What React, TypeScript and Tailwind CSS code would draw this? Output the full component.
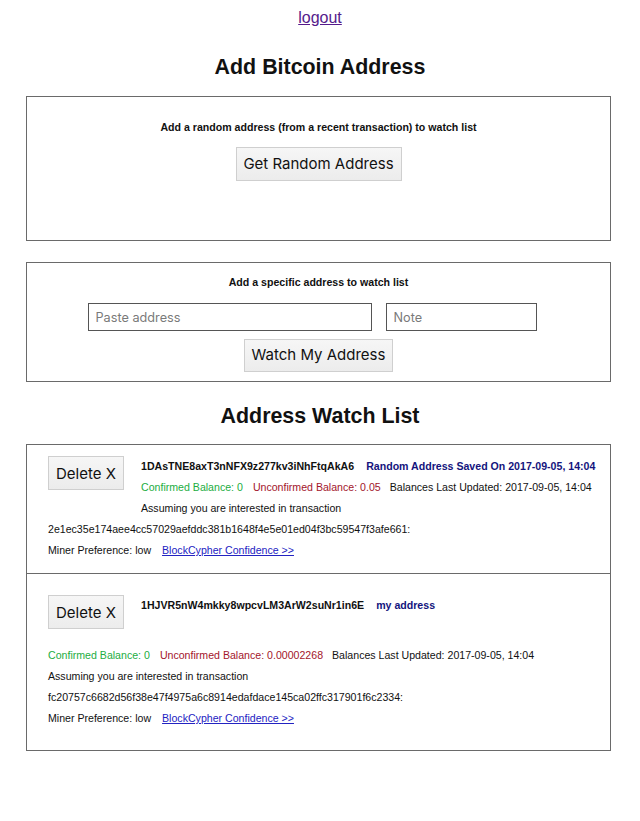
import React from 'react';

const sans = { fontFamily: '"Liberation Sans", Arial, sans-serif' };

function GrayButton({ children, className }: { children: React.ReactNode; className?: string }) {
  return (
    <button
      className={`whitespace-nowrap border border-[#cfcfcf] bg-gradient-to-b from-[#f6f6f6] to-[#ececec] text-[15px] text-[#111] font-['Inter',sans-serif] ${className ?? ''}`}
    >
      {children}
    </button>
  );
}

interface WatchItem {
  address: string;
  note: string;
  confirmed: string;
  unconfirmed: string;
  updated: string;
  tx: string;
}

const items: WatchItem[] = [
  {
    address: '1DAsTNE8axT3nNFX9z277kv3iNhFtqAkA6',
    note: 'Random Address Saved On 2017-09-05, 14:04',
    confirmed: '0',
    unconfirmed: '0.05',
    updated: '2017-09-05, 14:04',
    tx: '2e1ec35e174aee4cc57029aefddc381b1648f4e5e01ed04f3bc59547f3afe661',
  },
  {
    address: '1HJVR5nW4mkky8wpcvLM3ArW2suNr1in6E',
    note: 'my address',
    confirmed: '0',
    unconfirmed: '0.00002268',
    updated: '2017-09-05, 14:04',
    tx: 'fc20757c6682d56f38e47f4975a6c8914edafdace145ca02ffc317901f6c2334',
  },
];

// each line is its own max-content block, so a line too wide to sit beside the
// floated button drops below it (as in the second row)
const line = 'flow-root w-max whitespace-nowrap';

function WatchRow({ item, className }: { item: WatchItem; className: string }) {
  return (
    <div className={`pl-[21px] pr-[6px] text-[10.6px] leading-[21px] text-[#111] flow-root ${className}`}>
      <GrayButton className="float-left w-[76px] h-[34px] mr-[17px] mb-[16px]">Delete X</GrayButton>
      <div className={line}>
        <span className="font-bold mr-[12px]">{item.address}</span>
        <span className="font-bold text-[#14147d]">{item.note}</span>
      </div>
      <div className={line}>
        <span className="text-[#22ad3f] mr-[10px]">Confirmed Balance: {item.confirmed}</span>
        <span className="text-[#a3152b] mr-[9px]">Unconfirmed Balance: {item.unconfirmed}</span>
        <span>Balances Last Updated: {item.updated}</span>
      </div>
      <div className={line}>Assuming you are interested in transaction</div>
      <div className={line}>{item.tx}:</div>
      <div className={line}>
        <span className="mr-[11px]">Miner Preference: low</span>
        <a href="#" className="text-[#2323c2] underline">BlockCypher Confidence &gt;&gt;</a>
      </div>
    </div>
  );
}

export default function App() {
  return (
    <div className="min-h-screen bg-white text-[#111] pb-[70px]" style={sans}>
      <div className="pt-[8px] text-center leading-[20px]">
        <a href="#" className="text-[16px] text-[#551a8b] underline">logout</a>
      </div>

      <h1 className="mt-[25px] text-center text-[21.4px] leading-[28px] font-bold">Add Bitcoin Address</h1>

      <div className="ml-[26px] w-[585px] mt-[15px] h-[145px] border border-[#6a6a6a] pt-[23px] text-center">
        <p className="text-[10.6px] leading-[14px] font-bold">Add a random address (from a recent transaction) to watch list</p>
        <GrayButton className="mt-[13px] h-[34px] w-[166px]">Get Random Address</GrayButton>
      </div>

      <div className="ml-[26px] w-[585px] mt-[21px] border border-[#6a6a6a] pt-[12px] pb-[9px] text-center">
        <p className="text-[10.6px] leading-[14px] font-bold">Add a specific address to watch list</p>
        <div className="mt-[14px] flex justify-center gap-[14px] pr-[13px]">
          <input
            placeholder="Paste address"
            className="h-[28px] w-[284px] border border-[#555] px-[7px] text-[12.7px] font-['Inter',sans-serif] placeholder:text-[#7a7a7a] outline-none"
          />
          <input
            placeholder="Note"
            className="h-[28px] w-[151px] border border-[#555] px-[7px] text-[12.7px] font-['Inter',sans-serif] placeholder:text-[#7a7a7a] outline-none"
          />
        </div>
        <GrayButton className="mt-[8px] h-[33px] w-[149px]">Watch My Address</GrayButton>
      </div>

      <h1 className="mt-[20px] text-center text-[21.4px] leading-[28px] font-bold">Address Watch List</h1>

      <div className="ml-[26px] w-[585px] mt-[14px] border border-[#6a6a6a]">
        <WatchRow item={items[0]} className="pt-[11px] pb-[12px] border-b border-[#6a6a6a]" />
        <WatchRow item={items[1]} className="pt-[21px] pb-[21px]" />
      </div>
    </div>
  );
}
